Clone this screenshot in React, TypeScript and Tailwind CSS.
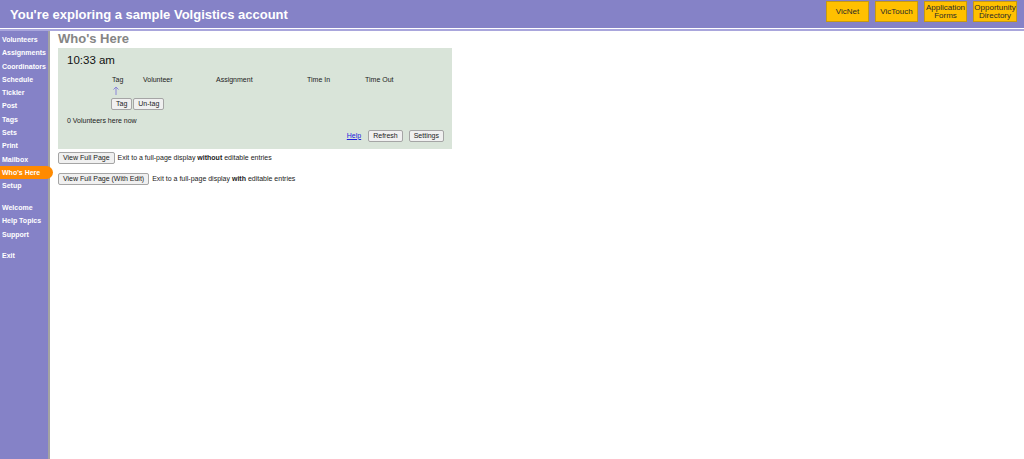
const NAV_TOP = [
  "Volunteers",
  "Assignments",
  "Coordinators",
  "Schedule",
  "Tickler",
  "Post",
  "Tags",
  "Sets",
  "Print",
  "Mailbox",
  "Who's Here",
  "Setup",
];

const NAV_BOTTOM = ["Welcome", "Help Topics", "Support"];

const TOP_BUTTONS = [
  { label: "VicNet", w: "w-[43px]" },
  { label: "VicTouch", w: "w-[43px]" },
  { label: "Application Forms", w: "w-[43px]" },
  { label: "Opportunity Directory", w: "w-[44px]" },
];

function NavItem({ label }: { label: string }) {
  const active = label === "Who's Here";
  return (
    <div
      className={`h-[13.3px] leading-[13px] pl-[2px] text-[7px] font-bold whitespace-nowrap text-white ${
        active ? "relative z-10 w-[53px] bg-[#ff8a00] rounded-r-full" : ""
      }`}
    >
      {label}
    </div>
  );
}

function SmallButton({ children }: { children: React.ReactNode }) {
  return (
    <button className="h-[12px] px-[4px] border border-[#a5a5a5] bg-[#f0f0f0] rounded-[2px] text-[7px] leading-[10px] text-[#222]">
      {children}
    </button>
  );
}

export default function App() {
  return (
    <div
      className="min-h-screen flex flex-col bg-white"
      style={{ fontFamily: '"Liberation Sans", Arial, sans-serif' }}
    >
      {/* Header */}
      <div className="h-[28px] bg-[#8582c7] flex items-center justify-between pl-[10px] pr-[7px]">
        <h1 className="text-[13px] font-bold text-white leading-none">
          You're exploring a sample Volgistics account
        </h1>
        <div className="flex gap-[6px] self-start pt-[1px]">
          {TOP_BUTTONS.map((b) => (
            <div
              key={b.label}
              className={`${b.w} h-[21px] bg-[#ffc000] border border-[#c79a10] flex items-center justify-center text-center text-[8px] leading-[8px] text-[#2a2a2a]`}
            >
              {b.label}
            </div>
          ))}
        </div>
      </div>
      <div className="h-[1px] bg-white" />
      <div className="h-[2px] bg-[#a9a6dc]" />

      <div className="flex flex-1">
        {/* Sidebar */}
        <div className="w-[50px] bg-[#8582c7] border-r-2 border-[#a3a3a3] pt-[2px]">
          {NAV_TOP.map((n) => (
            <NavItem key={n} label={n} />
          ))}
          <div className="h-[8.5px]" />
          {NAV_BOTTOM.map((n) => (
            <NavItem key={n} label={n} />
          ))}
          <div className="h-[8.5px]" />
          <NavItem label="Exit" />
        </div>

        {/* Main */}
        <div className="flex-1 pl-[8px]">
          <h2 className="text-[13px] font-bold text-[#858585] leading-[15px]">Who's Here</h2>

          <div className="mt-[2px] w-[394px] h-[101px] bg-[#d9e4d9] pl-[9px] pt-[5px] pr-[8px] flex flex-col">
            <div className="text-[11.5px] text-[#111] leading-[15px]">10:33 am</div>

            <div className="mt-[7px] pl-[45px] flex text-[7px] text-[#222] leading-[9px]">
              <span className="w-[31px]">Tag</span>
              <span className="w-[73px]">Volunteer</span>
              <span className="w-[91px]">Assignment</span>
              <span className="w-[58px]">Time In</span>
              <span>Time Out</span>
            </div>
            <div className="mt-[2px] pl-[46px] h-[9px]">
              <svg width="6" height="9" viewBox="0 0 6 9" fill="none" stroke="#8a86d8" strokeWidth="1">
                <path d="M3 9V1M0.5 3.5L3 1l2.5 2.5" />
              </svg>
            </div>
            <div className="pl-[44px] mt-[3px] flex gap-[1px]">
              <SmallButton>Tag</SmallButton>
              <SmallButton>Un-tag</SmallButton>
            </div>

            <div className="mt-[6px] text-[7px] leading-[9px] text-[#222]">0 Volunteers here now</div>

            <div className="mt-[5px] flex justify-end items-center gap-[6px]">
              <a className="text-[7px] text-[#2222dd] underline mr-[1px]" href="#">
                Help
              </a>
              <SmallButton>Refresh</SmallButton>
              <SmallButton>Settings</SmallButton>
            </div>
          </div>

          <div className="mt-[3px] flex items-center gap-[3px] text-[7px] text-[#222]">
            <SmallButton>View Full Page</SmallButton>
            <span>
              Exit to a full-page display <b>without</b> editable entries
            </span>
          </div>
          <div className="mt-[9px] flex items-center gap-[3px] text-[7px] text-[#222]">
            <SmallButton>View Full Page (With Edit)</SmallButton>
            <span>
              Exit to a full-page display <b>with</b> editable entries
            </span>
          </div>
        </div>
      </div>
    </div>
  );
}
